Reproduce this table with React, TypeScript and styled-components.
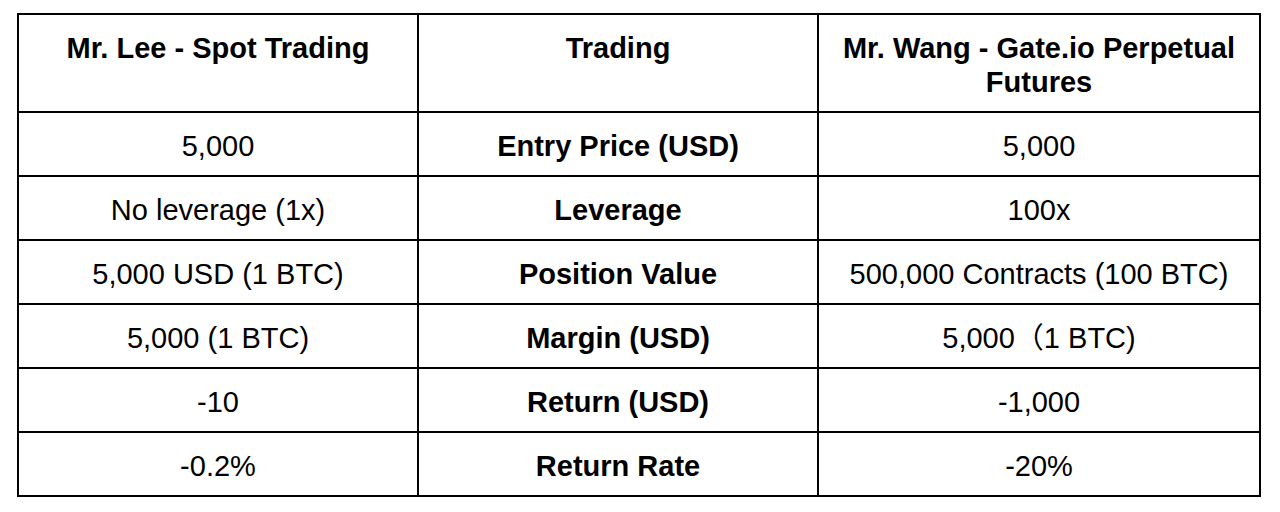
import React from 'react';
import styled, { createGlobalStyle } from "styled-components";

const GlobalStyle = createGlobalStyle`
    html, body {
        margin: 0;
        padding: 0;
        background-color: #ffffff;
    }
`;

const Page = styled.main`
    width: 1280px;
    height: 512px;
    padding: 13px 0 0 17px;
    box-sizing: border-box;
    background-color: #ffffff;
`;

const Table = styled.table`
    width: 1244px;
    table-layout: fixed;
    border-collapse: collapse;
    border: 2px solid #000000;
    font-family: "Liberation Sans", Arial, "Noto Sans CJK SC", sans-serif;
    font-size: 29px;
    line-height: 34px;
    color: #000000;
`;

const Col = styled.col<{ $width?: number }>`
    width: ${(p) => (p.$width ? `${p.$width}px` : "auto")};
`;

const HeadRow = styled.tr`
    height: 98px;
`;

const Row = styled.tr`
    height: 64px;
`;

const HeadCell = styled.th`
    border: 2px solid #000000;
    padding: 16px 12px 0;
    vertical-align: top;
    text-align: center;
    font-weight: 700;
`;

const Cell = styled.td<{ $bold?: boolean }>`
    border: 2px solid #000000;
    padding: 4px 12px 0;
    vertical-align: middle;
    text-align: center;
    font-weight: ${(p) => (p.$bold ? 700 : 400)};
    white-space: nowrap;
`;

const rows = [
    { spot: "5,000", label: "Entry Price (USD)", futures: "5,000" },
    { spot: "No leverage (1x)", label: "Leverage", futures: "100x" },
    { spot: "5,000 USD (1 BTC)", label: "Position Value", futures: "500,000 Contracts (100 BTC)" },
    { spot: "5,000 (1 BTC)", label: "Margin (USD)", futures: "5,000（1 BTC)" },
    { spot: "-10", label: "Return (USD)", futures: "-1,000" },
    { spot: "-0.2%", label: "Return Rate", futures: "-20%" },
];

const App = () => {
    return (
        <Page>
            <GlobalStyle />
            <Table>
                <colgroup>
                    <Col $width={400} />
                    <Col $width={400} />
                    <Col />
                </colgroup>
                <thead>
                    <HeadRow>
                        <HeadCell>Mr. Lee - Spot Trading</HeadCell>
                        <HeadCell>Trading</HeadCell>
                        <HeadCell>Mr. Wang - Gate.io Perpetual Futures</HeadCell>
                    </HeadRow>
                </thead>
                <tbody>
                    {rows.map((r) => (
                        <Row key={r.label}>
                            <Cell>{r.spot}</Cell>
                            <Cell $bold>{r.label}</Cell>
                            <Cell>{r.futures}</Cell>
                        </Row>
                    ))}
                </tbody>
            </Table>
        </Page>
    )
}

export default App;
